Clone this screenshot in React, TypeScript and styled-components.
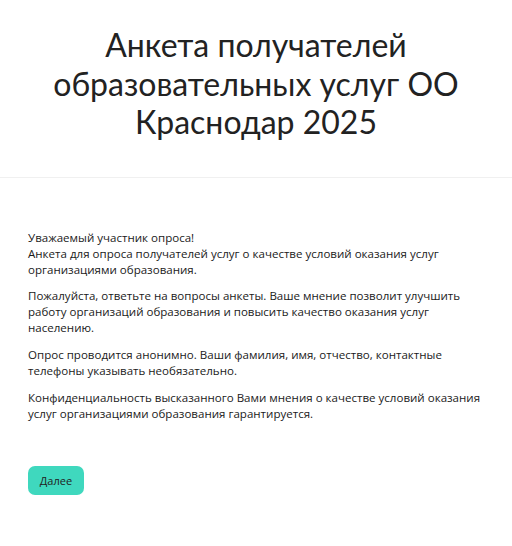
import React from "react";
import styled, { createGlobalStyle } from "styled-components";

const Global = createGlobalStyle`
  html, body { margin: 0; padding: 0; background: #fff; }
  body { font-family: "Open Sans", Lato, sans-serif; color: #222; }
`;

const Page = styled.div`
  display: flex;
  flex-direction: column;
  width: 512px;
`;

const Header = styled.header`
  padding: 26px 28px 35px;
  border-bottom: 1px solid #f0f0f0;
`;

const Title = styled.h1`
  margin: 0;
  font-family: Lato, sans-serif;
  font-weight: 400;
  font-size: 32px;
  line-height: 38.5px;
  text-align: center;
  color: #222;
`;

const Body = styled.main`
  padding: 52px 22px 40px 28px;
  display: flex;
  flex-direction: column;
`;

const Paragraph = styled.p`
  margin: 0 0 10.7px;
  font-family: "Open Sans", sans-serif;
  font-size: 11.55px;
  line-height: 16px;
  color: #1a1a1a;
`;

const Button = styled.button`
  align-self: flex-start;
  margin-top: 34px;
  height: 29px;
  width: 56px;
  border: none;
  border-radius: 7px;
  background: #3fd8be;
  color: #222;
  font-family: "Open Sans", sans-serif;
  font-size: 11px;
  padding: 0;
  cursor: pointer;
`;

export default function App() {
  return (
    <Page>
      <Global />
      <Header>
        <Title>
          Анкета получателей образовательных услуг ОО Краснодар 2025
        </Title>
      </Header>
      <Body>
        <Paragraph>
          Уважаемый участник опроса!
          <br />
          Анкета для опроса получателей услуг о качестве условий оказания услуг
          организациями образования.
        </Paragraph>
        <Paragraph>
          Пожалуйста, ответьте на вопросы анкеты. Ваше мнение позволит улучшить
          работу организаций образования и повысить качество оказания услуг
          населению.
        </Paragraph>
        <Paragraph>
          Опрос проводится анонимно. Ваши фамилия, имя, отчество, контактные
          телефоны указывать необязательно.
        </Paragraph>
        <Paragraph>
          Конфиденциальность высказанного Вами мнения о качестве условий оказания
          услуг организациями образования гарантируется.
        </Paragraph>
        <Button>Далее</Button>
      </Body>
    </Page>
  );
}
